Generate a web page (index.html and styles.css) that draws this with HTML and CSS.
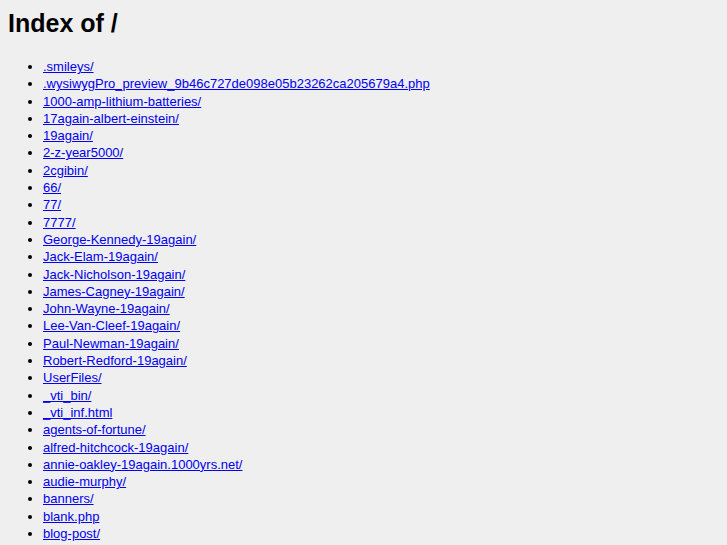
FILE: index.html
```html
<!DOCTYPE html>
<html>
<head>
<meta charset="UTF-8" />
<title>Index of /</title>
<link rel="stylesheet" href="styles.css">
</head>
<body>
<h1>Index of /</h1>
<ul class="listado">
  <li><a href="#">.smileys/</a></li>
  <li><a href="#">.wysiwygPro_preview_9b46c727de098e05b23262ca205679a4.php</a></li>
  <li><a href="#">1000-amp-lithium-batteries/</a></li>
  <li><a href="#">17again-albert-einstein/</a></li>
  <li><a href="#">19again/</a></li>
  <li><a href="#">2-z-year5000/</a></li>
  <li><a href="#">2cgibin/</a></li>
  <li><a href="#">66/</a></li>
  <li><a href="#">77/</a></li>
  <li><a href="#">7777/</a></li>
  <li><a href="#">George-Kennedy-19again/</a></li>
  <li><a href="#">Jack-Elam-19again/</a></li>
  <li><a href="#">Jack-Nicholson-19again/</a></li>
  <li><a href="#">James-Cagney-19again/</a></li>
  <li><a href="#">John-Wayne-19again/</a></li>
  <li><a href="#">Lee-Van-Cleef-19again/</a></li>
  <li><a href="#">Paul-Newman-19again/</a></li>
  <li><a href="#">Robert-Redford-19again/</a></li>
  <li><a href="#">UserFiles/</a></li>
  <li><a href="#">_vti_bin/</a></li>
  <li><a href="#">_vti_inf.html</a></li>
  <li><a href="#">agents-of-fortune/</a></li>
  <li><a href="#">alfred-hitchcock-19again/</a></li>
  <li><a href="#">annie-oakley-19again.1000yrs.net/</a></li>
  <li><a href="#">audie-murphy/</a></li>
  <li><a href="#">banners/</a></li>
  <li><a href="#">blank.php</a></li>
  <li><a href="#">blog-post/</a></li>
</ul>
</body>
</html>
```

FILE: styles.css
```css
body {
  margin: 8px;
  background: #efefef;
  font-family: "Liberation Sans", Arial, sans-serif;
  font-size: 13px;
  color: #000;
}

h1 {
  margin: 1px 0 0 0;
  font-size: 25px;
  font-weight: bold;
}

.listado {
  margin: 20px 0 0 0;
  padding-left: 35px;
  line-height: 17.3px;
}

.listado a {
  color: #0000ee;
}
```
